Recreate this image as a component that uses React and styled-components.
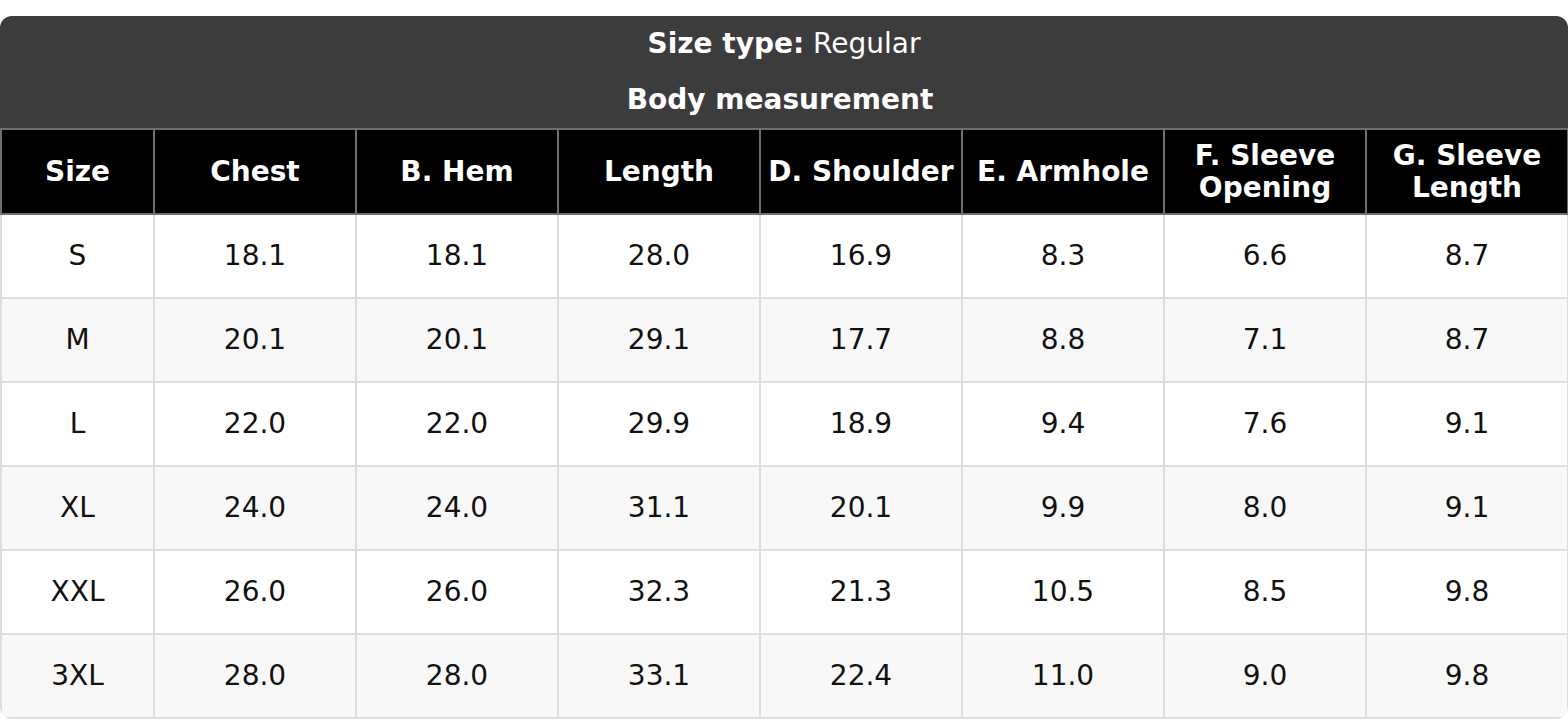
import React from "react"
import styled, { createGlobalStyle } from "styled-components"

const GlobalStyle = createGlobalStyle`
  html, body {
    margin: 0;
    padding: 0;
    background: #fff;
    font-family: "DejaVu Sans", "Liberation Sans", sans-serif;
  }
`

const Page = styled.div`
  padding-top: 16px;
  width: 1568px;
`

const Card = styled.div`
  border-radius: 12px;
  overflow: hidden;
  background: #fff;
`

const Title = styled.div`
  background: #3c3c3c;
  color: #fff;
  text-align: center;
  display: flex;
  flex-direction: column;
  gap: 24px;
  padding: 12px 0 12px;
  font-size: 28px;
  line-height: 32px;
`

const Label = styled.span`
  font-weight: ${(p) => (p.$bold ? "bold" : "normal")};
`

const Subtitle = styled.div`
  font-weight: bold;
  padding-right: 8px;
`

const Table = styled.table`
  width: 100%;
  border-collapse: collapse;
  table-layout: fixed;
  font-size: 28px;
  line-height: 32px;
`

const Th = styled.th`
  background: #000;
  color: #fff;
  font-weight: bold;
  border: 2px solid #6e6e6e;
  height: 83px;
  padding: 0 4px;
  text-align: center;
`

const Row = styled.tr`
  background: ${(p) => (p.$alt ? "#f8f8f8" : "#fff")};
`

const Td = styled.td`
  border: 2px solid #dddddd;
  color: #111;
  height: 82px;
  padding: 0;
  text-align: center;
`

const columns = [
  { label: "Size", width: 153 },
  { label: "Chest", width: 202 },
  { label: "B. Hem", width: 202 },
  { label: "Length", width: 202 },
  { label: "D. Shoulder", width: 202 },
  { label: "E. Armhole", width: 202 },
  { label: "F. Sleeve Opening", width: 202 },
  { label: "G. Sleeve Length", width: 202 },
]

const rows = [
  ["S", "18.1", "18.1", "28.0", "16.9", "8.3", "6.6", "8.7"],
  ["M", "20.1", "20.1", "29.1", "17.7", "8.8", "7.1", "8.7"],
  ["L", "22.0", "22.0", "29.9", "18.9", "9.4", "7.6", "9.1"],
  ["XL", "24.0", "24.0", "31.1", "20.1", "9.9", "8.0", "9.1"],
  ["XXL", "26.0", "26.0", "32.3", "21.3", "10.5", "8.5", "9.8"],
  ["3XL", "28.0", "28.0", "33.1", "22.4", "11.0", "9.0", "9.8"],
]

const App = () => {
  return (
    <Page>
      <GlobalStyle />
      <Card>
        <Title>
          <div>
            <Label $bold>Size type:</Label> <Label>Regular</Label>
          </div>
          <Subtitle>Body measurement</Subtitle>
        </Title>
        <Table>
          <colgroup>
            {columns.map((c) => (
              <col key={c.label} style={{ width: c.width }} />
            ))}
          </colgroup>
          <thead>
            <tr>
              {columns.map((c) => (
                <Th key={c.label}>{c.label}</Th>
              ))}
            </tr>
          </thead>
          <tbody>
            {rows.map((r, i) => (
              <Row key={r[0]} $alt={i % 2 === 1}>
                {r.map((v, j) => (
                  <Td key={j}>{v}</Td>
                ))}
              </Row>
            ))}
          </tbody>
        </Table>
      </Card>
    </Page>
  )
}

export default App
